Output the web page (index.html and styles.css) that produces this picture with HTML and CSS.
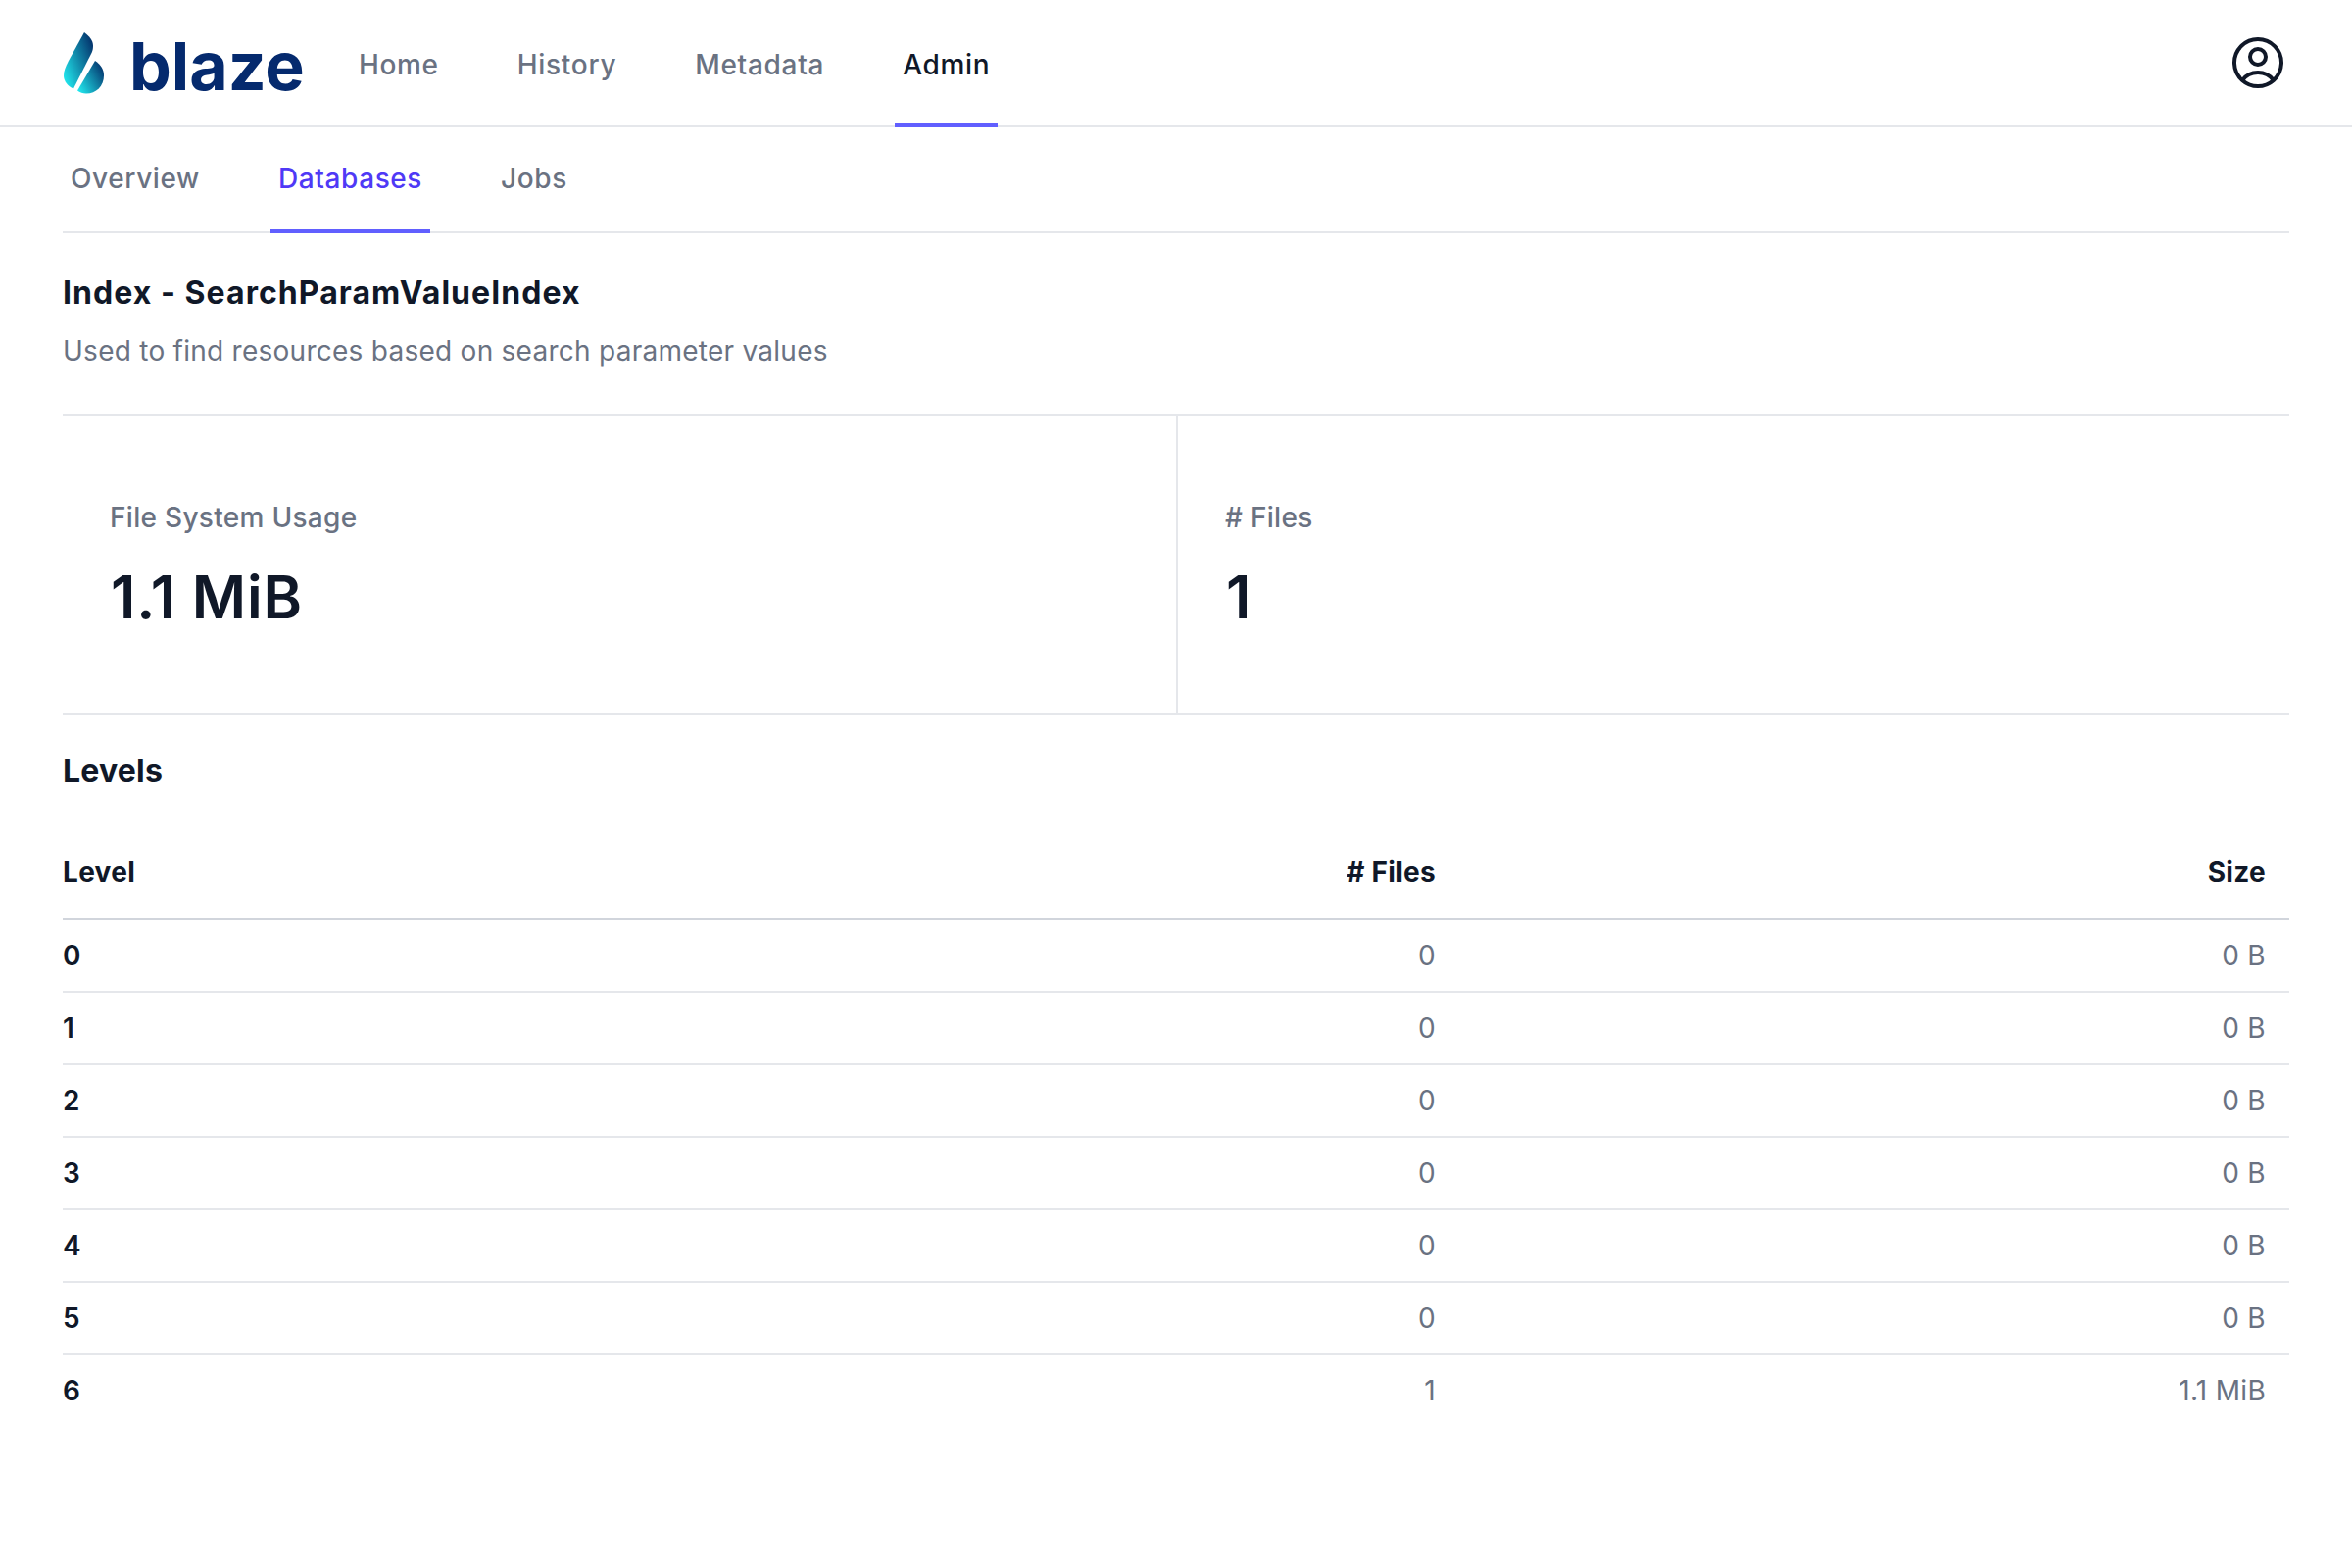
FILE: index.html
```html
<!DOCTYPE html>
<html lang="en">
<head>
    <meta charset="UTF-8">
    <title>Blaze - Index SearchParamValueIndex</title>
    <link rel="stylesheet" href="styles.css">
</head>
<body>
    <header class="topbar">
        <a class="logo" href="#">
            <svg class="logo-drop" width="41" height="63" viewBox="0 0 41 63">
                <defs>
                    <linearGradient id="dropFill" x1="0" y1="0.95" x2="1" y2="0.25">
                        <stop offset="0" stop-color="#22f0f4"/>
                        <stop offset="1" stop-color="#04376f"/>
                    </linearGradient>
                </defs>
                <path fill="url(#dropFill)" d="M21 0C26 4 30 8 30 14C30 17 29.5 19 28 22L10 57.5C4 55 0 50 0 44C0 39 2 35 5 29Z"/>
                <path fill="url(#dropFill)" d="M32 29C38 33 41 38 41 44C41 55 33 62.5 23 62.5C19.5 62.5 16.5 61.5 14 59.5Z"/>
            </svg>
            <span class="logo-text">blaze</span>
        </a>
        <nav class="main-nav">
            <a href="#">Home</a>
            <a href="#">History</a>
            <a href="#">Metadata</a>
            <a class="current" href="#">Admin</a>
        </nav>
        <svg class="user-icon" width="64" height="64" viewBox="0 0 24 24" fill="none" stroke="#101828" stroke-width="1.5" stroke-linecap="round" stroke-linejoin="round">
            <path d="M17.982 18.725A7.488 7.488 0 0 0 12 15.75a7.488 7.488 0 0 0-5.982 2.975m11.963 0a9 9 0 1 0-11.963 0m11.963 0A8.966 8.966 0 0 1 12 21a8.966 8.966 0 0 1-5.982-2.275M15 9.75a3 3 0 1 1-6 0 3 3 0 0 1 6 0Z"/>
        </svg>
    </header>

    <main class="content">
        <nav class="sub-nav">
            <a href="#">Overview</a>
            <a class="current" href="#">Databases</a>
            <a href="#">Jobs</a>
        </nav>

        <section class="index-head">
            <h1>Index - SearchParamValueIndex</h1>
            <p>Used to find resources based on search parameter values</p>
        </section>

        <section class="stats">
            <div class="stat">
                <div class="stat-label">File System Usage</div>
                <div class="stat-value">1.1 MiB</div>
            </div>
            <div class="stat">
                <div class="stat-label"># Files</div>
                <div class="stat-value">1</div>
            </div>
        </section>

        <h2>Levels</h2>
        <table class="levels">
            <thead>
                <tr><th class="col-level">Level</th><th class="col-files"># Files</th><th>Size</th></tr>
            </thead>
            <tbody>
                <tr><td>0</td><td>0</td><td>0 B</td></tr>
                <tr><td>1</td><td>0</td><td>0 B</td></tr>
                <tr><td>2</td><td>0</td><td>0 B</td></tr>
                <tr><td>3</td><td>0</td><td>0 B</td></tr>
                <tr><td>4</td><td>0</td><td>0 B</td></tr>
                <tr><td>5</td><td>0</td><td>0 B</td></tr>
                <tr><td>6</td><td>1</td><td>1.1 MiB</td></tr>
            </tbody>
        </table>
    </main>
</body>
</html>
```

FILE: styles.css
```css
body {
    margin: 0;
    font-family: "Inter", "Noto Sans", sans-serif;
    font-size: 28px;
    line-height: 40px;
    letter-spacing: 0.3px;
    color: #101828;
    background-color: #fff;
}

a {
    text-decoration: none;
    color: inherit;
}

.topbar {
    display: flex;
    align-items: stretch;
    height: 128px;
    padding: 0 64px;
    border-bottom: 2px solid #e5e7eb;
}

.logo {
    display: flex;
    align-items: center;
    gap: 26px;
    margin-left: 1px;
    margin-right: 47px;
}

.logo-text {
    margin-top: 5px;
    font-size: 68px;
    line-height: 74px;
    font-weight: 700;
    letter-spacing: 0;
    color: #052a6e;
}

.main-nav {
    display: flex;
    gap: 64px;
}

.main-nav a,
.sub-nav a {
    display: flex;
    align-items: center;
    padding: 0 8px;
    color: #6a7282;
    font-weight: 500;
    letter-spacing: 0.6px;
}

.main-nav a {
    height: 130px;
    padding-top: 6px;
    box-sizing: border-box;
    border-bottom: 4px solid transparent;
    letter-spacing: 0.7px;
}

.main-nav a.current {
    color: #101828;
    border-bottom-color: #615fff;
}

.user-icon {
    margin: 32px 0 0 auto;
}

.content {
    padding: 0 64px;
}

.sub-nav {
    display: flex;
    gap: 64px;
    height: 106px;
    border-bottom: 2px solid #e5e7eb;
}

.sub-nav a {
    height: 108px;
    box-sizing: border-box;
    border-bottom: 4px solid transparent;
}

.sub-nav a.current {
    color: #4f39f6;
    border-bottom-color: #615fff;
}

.index-head {
    padding: 39px 0 44px;
    border-bottom: 2px solid #e5e7eb;
}

h1,
h2 {
    margin: 0;
    font-size: 32px;
    line-height: 44px;
    font-weight: 700;
    letter-spacing: 1.05px;
}

.index-head p {
    margin: 17px 0 0;
    color: #6a7282;
    letter-spacing: 0.26px;
}

.stats {
    display: grid;
    grid-template-columns: 1fr 1fr;
    border-bottom: 2px solid #e5e7eb;
}

.stat {
    height: 304px;
    padding: 84px 48px 0;
    box-sizing: border-box;
}

.stat + .stat {
    border-left: 2px solid #e5e7eb;
}

.stat-label {
    color: #6a7282;
    font-weight: 500;
}

.stat-value {
    margin-top: 25px;
    margin-left: 1px;
    font-size: 60px;
    line-height: 72px;
    font-weight: 600;
    letter-spacing: 0.8px;
}

h2 {
    margin-top: 35px;
    letter-spacing: 0.2px;
}

.levels {
    width: 100%;
    margin-top: 38px;
    border-collapse: collapse;
    table-layout: fixed;
}

.levels th,
.levels td {
    padding: 16px 24px 16px 0;
    text-align: right;
    font-weight: 400;
    color: #6a7282;
}

.levels th {
    padding: 23px 24px 27px 0;
    color: #101828;
    font-weight: 700;
    border-bottom: 2px solid #d1d5dc;
}

.levels th:first-child,
.levels td:first-child {
    text-align: left;
    color: #101828;
    font-weight: 600;
}

.levels th:first-child {
    font-weight: 700;
}

.levels tbody tr + tr td {
    border-top: 2px solid #e5e7eb;
}

.col-level {
    width: 976px;
}

.col-files {
    width: 401px;
}
```
